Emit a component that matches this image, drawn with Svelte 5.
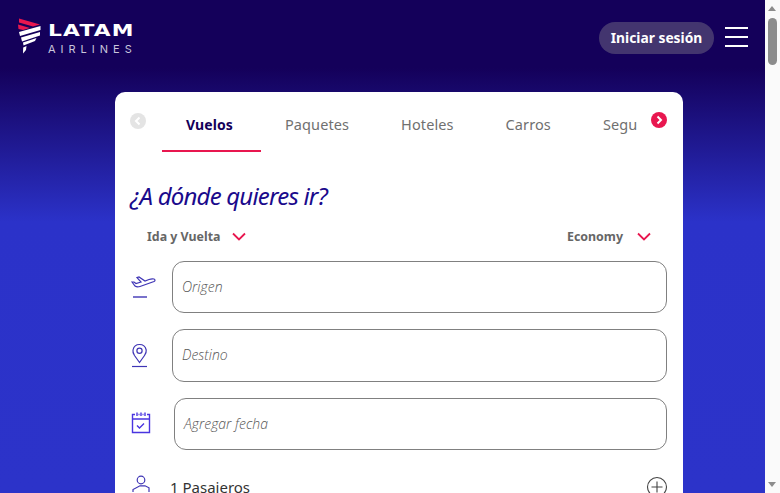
<script>
  const tabs = ['Vuelos', 'Paquetes', 'Hoteles', 'Carros', 'Seguros'];
</script>

<div class="window">
  <div class="page">
    <header>
      <div class="logo">
        <svg class="mark" width="23" height="36" viewBox="0 0 23 36">
          <path d="M1 0.5 L22 6.5 L15 8.5 L1 4.5Z" fill="#e8174f"/>
          <path d="M0 6.5 L12 10 L5 12 L0.5 11Z" fill="#e8174f"/>
          <path d="M22.5 8 V12 L2 18 L1 14Z" fill="#fff"/>
          <path d="M22 14 V17.5 L4 23.5 L3 19.5Z" fill="#fff"/>
          <path d="M18.5 20 L17 23 L5.5 27.5 L5 24.5Z" fill="#fff"/>
          <path d="M8.5 28 L8 32 L5 35.5 L5.2 29.5Z" fill="#fff"/>
        </svg>
        <div class="wordmark">
          <span class="latam">LATAM</span>
          <span class="airlines">AIRLINES</span>
        </div>
      </div>
      <div class="actions">
        <button class="login">Iniciar sesión</button>
        <div class="burger"><i></i><i></i><i></i></div>
      </div>
    </header>

    <main class="card">
      <nav class="tabbar">
        <span class="arrow prev">
          <svg width="16" height="16" viewBox="0 0 16 16"><circle cx="8" cy="8" r="8" fill="#e4e4e4"/><path d="M9.5 4.5 L6 8 L9.5 11.5" fill="none" stroke="#fff" stroke-width="2"/></svg>
        </span>
        <div class="tabs">
          {#each tabs as tab, i}
            <span class="tab" class:active={i === 0}>{tab}</span>
          {/each}
        </div>
        <span class="arrow next">
          <svg width="16" height="16" viewBox="0 0 16 16"><circle cx="8" cy="8" r="8" fill="#e8174f"/><path d="M6.5 4.5 L10 8 L6.5 11.5" fill="none" stroke="#fff" stroke-width="2"/></svg>
        </span>
      </nav>

      <h1>¿A dónde quieres ir?</h1>

      <div class="options">
        <span class="option">Ida y Vuelta
          <svg width="14" height="9" viewBox="0 0 14 9"><path d="M1 1.5 L7 7.5 L13 1.5" fill="none" stroke="#e8174f" stroke-width="1.8"/></svg>
        </span>
        <span class="option economy">Economy
          <svg width="14" height="9" viewBox="0 0 14 9"><path d="M1 1.5 L7 7.5 L13 1.5" fill="none" stroke="#e8174f" stroke-width="1.8"/></svg>
        </span>
      </div>

      <div class="field">
        <svg class="icon" width="26" height="26" viewBox="0 0 26 26" fill="none" stroke="#3f35b5" stroke-width="1.2">
          <path d="M1 8 L4 12 Q6 13.5 9 12.5 L23 7.5 Q25 6 23 5 Q21 4.4 18 5.5 L14 7 L8 3 L6 3.6 L10 8 L5 9.5 L3 8Z"/>
          <path d="M2 23 H16" stroke-width="1.4"/>
        </svg>
        <div class="input">Origen</div>
      </div>

      <div class="field tall">
        <svg class="icon" width="26" height="26" viewBox="0 0 26 26" fill="none" stroke="#3f35b5" stroke-width="1.2">
          <path d="M8.5 19.5 L3.5 12.5 Q1.5 9.5 2 7 Q3.2 1.5 8.5 1.5 Q14 1.5 15.2 7 Q15.6 9.5 13.5 12.5Z"/>
          <circle cx="8.5" cy="7.8" r="2.6"/>
          <path d="M1 23.5 H16"/>
        </svg>
        <div class="input">Destino</div>
      </div>

      <div class="field date">
        <svg class="icon" width="26" height="26" viewBox="0 0 26 26" fill="none" stroke="#4a35e0" stroke-width="1.4">
          <path d="M4 3.5 H1.5 V21.5 H18.5 V3.5 H16 M7.5 3.5 H8.5 M11.5 3.5 H12.5 M1.5 8 H18.5"/>
          <path d="M6 1.5 V5 M10 1.5 V5 M14 1.5 V5"/>
          <path d="M6 14.5 L8.5 17 L13 12.5"/>
        </svg>
        <div class="input">Agregar fecha</div>
      </div>

      <div class="passengers">
        <svg class="icon" width="26" height="26" viewBox="0 0 26 26" fill="none" stroke="#3f35b5" stroke-width="1.2">
          <circle cx="10" cy="6" r="3.8"/>
          <path d="M2 18 V15.5 L9 11.8 L14 11.8 L18 13.8 V18"/>
        </svg>
        <span class="count">1 Pasajeros</span>
        <svg class="plus" width="22" height="22" viewBox="0 0 22 22" fill="none" stroke="#444" stroke-width="1.1">
          <circle cx="11" cy="11" r="9.5"/>
          <path d="M5.5 11 H16.5 M11 5.5 V16.5"/>
        </svg>
      </div>
    </main>
  </div>

  <aside class="scrollbar">
    <span class="up"></span>
    <span class="thumb"></span>
    <span class="down"></span>
  </aside>
</div>

<style>
  :global(body) { margin: 0; overflow: hidden; }

  .window {
    display: flex;
    height: 493px;
    overflow: hidden;
    font-family: "Noto Sans", sans-serif;
  }

  .page {
    flex: 1;
    min-width: 0;
    overflow: hidden;
    background: linear-gradient(180deg, #14005a 0, #14005a 68px, #2b32c9 222px, #2c33c9 100%);
  }

  header {
    height: 92px;
    box-sizing: border-box;
    padding: 17px 17px 0 18px;
    display: flex;
    justify-content: space-between;
    align-items: flex-start;
  }

  .logo { display: flex; gap: 7px; }
  .mark { display: block; margin-top: 1px; }

  .wordmark { display: flex; flex-direction: column; margin-top: 5px; }

  .latam {
    font-family: "DejaVu Sans", sans-serif;
    font-weight: 700;
    font-size: 16.5px;
    line-height: 18px;
    color: #fff;
    letter-spacing: 0.9px;
    transform: scaleX(1.32);
    transform-origin: left center;
  }

  .airlines {
    font-family: "Inter", sans-serif;
    font-size: 11px;
    line-height: 12px;
    margin-top: 3px;
    color: #c9c6dc;
    letter-spacing: 5px;
  }

  .actions { display: flex; align-items: center; gap: 11px; padding-top: 5px; }

  .login {
    height: 32px;
    width: 115px;
    border: 0;
    padding: 0 0 2px;
    border-radius: 16px;
    background: #43356f;
    color: #fff;
    font-family: "Noto Sans", sans-serif;
    font-weight: 700;
    font-size: 13.8px;
  }

  .burger { display: flex; flex-direction: column; gap: 6.5px; width: 23px; margin-top: -2px; }
  .burger i { display: block; height: 2.5px; background: #fff; }

  .card {
    margin: 0 82px 0 115px;
    height: 420px;
    box-sizing: border-box;
    background: #fff;
    border-radius: 10px 10px 0 0;
    padding: 0 16px 0 14px;
    overflow: hidden;
  }

  .tabbar { display: flex; height: 61px; position: relative; }

  .arrow { flex: none; height: 16px; }
  .arrow svg { display: block; }
  .prev { margin: 21px 16px 0 1px; }
  .next { margin: 20px 0 0 14px; }

  .tabs {
    width: 475px;
    flex: none;
    display: flex;
    gap: 52px;
    padding-left: 24px;
    box-sizing: border-box;
    overflow: hidden;
  }

  .tab {
    flex: none;
    height: 60px;
    box-sizing: border-box;
    padding-top: 20px;
    font-size: 14.5px;
    line-height: 24px;
    letter-spacing: 0.1px;
    color: #707070;
    position: relative;
  }

  .active {
    color: #14005a;
    font-weight: 700;
    font-size: 14px;
    padding-top: 21px;
  }

  .active::after {
    content: "";
    position: absolute;
    left: -24px;
    right: -28px;
    bottom: 0;
    height: 2px;
    background: #e8174f;
  }

  h1 {
    margin: 26px 0 0;
    padding-left: 1px;
    font-family: "Noto Sans", sans-serif;
    font-style: italic;
    font-weight: 400;
    font-size: 24px;
    line-height: 34px;
    color: #1a0a8c;
    letter-spacing: -0.8px;
  }

  .options {
    display: flex;
    justify-content: space-between;
    padding: 0 16px 0 18px;
    margin-top: 12px;
    height: 36px;
  }

  .option {
    display: flex;
    align-items: center;
    gap: 12px;
    height: 22px;
    font-size: 12.4px;
    font-weight: 700;
    color: #666;
  }

  .economy { gap: 14px; }

  .field {
    display: flex;
    align-items: center;
    gap: 17px;
    height: 52px;
    margin-bottom: 16px;
  }
  .field.tall { height: 53px; }
  .field.date { gap: 19px; }
  .field .icon { margin-left: 2px; flex: none; margin-right: -2px; width: 26px; }

  .input {
    flex: 1;
    height: 100%;
    box-sizing: border-box;
    border: 1px solid #808080;
    border-radius: 12px;
    padding: 0 0 2px 9px;
    display: flex;
    align-items: center;
    font-family: "Open Sans", sans-serif;
    font-style: italic;
    font-weight: 300;
    font-size: 14px;
    color: #555;
  }

  .passengers {
    display: flex;
    align-items: center;
    margin-top: 19px;
    height: 36px;
  }
  .passengers .icon { margin-left: 2px; flex: none; }
  .count { margin-left: 13px; font-size: 15px; color: #333; flex: 1; }
  .plus { flex: none; margin-right: -1px; }

  .scrollbar {
    flex: none;
    width: 15px;
    background: #fafafa;
    position: relative;
  }

  .up, .down {
    position: absolute;
    left: 3px;
    width: 0;
    height: 0;
    border-left: 4.5px solid transparent;
    border-right: 4.5px solid transparent;
  }
  .up { top: 6px; border-bottom: 5px solid #8c8c8c; }
  .down { bottom: 6px; border-top: 5px solid #8c8c8c; }

  .thumb {
    position: absolute;
    left: 3px;
    top: 18px;
    width: 9px;
    height: 47px;
    border-radius: 5px;
    background: #8c8c8c;
  }
</style>
